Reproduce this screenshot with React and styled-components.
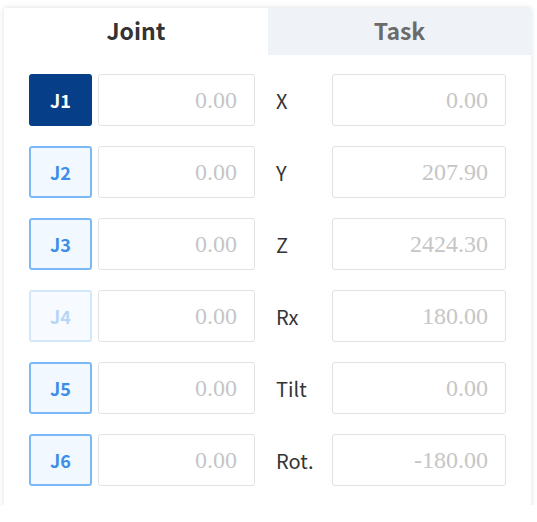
import React from "react";
import styled, { createGlobalStyle, css } from "styled-components";

const GlobalStyle = createGlobalStyle`
  html, body {
    margin: 0;
    padding: 0;
    background: #ffffff;
  }
  body {
    font-family: "Noto Sans CJK KR", "Noto Sans", sans-serif;
  }
`;

const Frame = styled.div`
  box-sizing: border-box;
  width: 537px;
  height: 505px;
  padding: 8px 6px 0 4px;
  overflow: hidden;
`;

const Card = styled.div`
  background: #ffffff;
  height: 520px;
  box-shadow: 0 0 6px rgba(0, 0, 0, 0.13);
`;

const Tabs = styled.div`
  display: grid;
  grid-template-columns: 264px 1fr;
  height: 47px;
`;

const Tab = styled.div`
  display: flex;
  align-items: center;
  justify-content: center;
  padding-bottom: 3px;
  font-size: 23px;
  font-weight: 700;
  color: ${props => (props.active ? "#333333" : "#6b6b6b")};
  background: ${props => (props.active ? "#ffffff" : "#eff3f7")};
`;

const Body = styled.div`
  display: grid;
  grid-template-columns: 63px 157px 65px 174px;
  column-gap: 6px;
  row-gap: 20px;
  padding: 19px 25px 0 25px;
  grid-auto-rows: 52px;
`;

const JointButton = styled.button`
  box-sizing: border-box;
  display: flex;
  align-items: center;
  justify-content: center;
  height: 52px;
  border-radius: 3px;
  font-family: "Noto Sans CJK KR", "Noto Sans", sans-serif;
  font-size: 18px;
  font-weight: 700;
  padding: 0;
  border: 2px solid #7cb9f4;
  background: #f2f8ff;
  color: #3d8ee8;

  ${props =>
    props.selected &&
    css`
      border-color: #063f87;
      background: #063f87;
      color: #ffffff;
    `}

  ${props =>
    props.disabled &&
    css`
      border-color: #d3e7fb;
      background: #f7fbff;
      color: #b7d6f6;
    `}
`;

const ValueBox = styled.div`
  box-sizing: border-box;
  display: flex;
  align-items: center;
  justify-content: flex-end;
  height: 52px;
  padding-right: 17px;
  border: 1px solid #e3e3e3;
  border-radius: 3px;
  font-family: "Liberation Serif", serif;
  font-size: 24px;
  color: #c6c6c6;
  box-shadow: 0 0 1px rgba(0, 0, 0, 0.06);
`;

const Label = styled.div`
  display: flex;
  align-items: center;
  font-size: 20px;
  color: #333333;
  padding-left: 15px;
`;

const joints = [
  { name: "J1", value: "0.00", selected: true },
  { name: "J2", value: "0.00" },
  { name: "J3", value: "0.00" },
  { name: "J4", value: "0.00", disabled: true },
  { name: "J5", value: "0.00" },
  { name: "J6", value: "0.00" },
];

const task = [
  { label: "X", value: "0.00" },
  { label: "Y", value: "207.90" },
  { label: "Z", value: "2424.30" },
  { label: "Rx", value: "180.00" },
  { label: "Tilt", value: "0.00" },
  { label: "Rot.", value: "-180.00" },
];

export default function App() {
  return (
    <>
      <GlobalStyle />
      <Frame>
        <Card>
          <Tabs>
            <Tab active>Joint</Tab>
            <Tab>Task</Tab>
          </Tabs>
          <Body>
            {joints.map((j, i) => (
              <React.Fragment key={j.name}>
                <JointButton selected={j.selected} disabled={j.disabled}>
                  {j.name}
                </JointButton>
                <ValueBox>{j.value}</ValueBox>
                <Label>{task[i].label}</Label>
                <ValueBox>{task[i].value}</ValueBox>
              </React.Fragment>
            ))}
          </Body>
        </Card>
      </Frame>
    </>
  );
}
